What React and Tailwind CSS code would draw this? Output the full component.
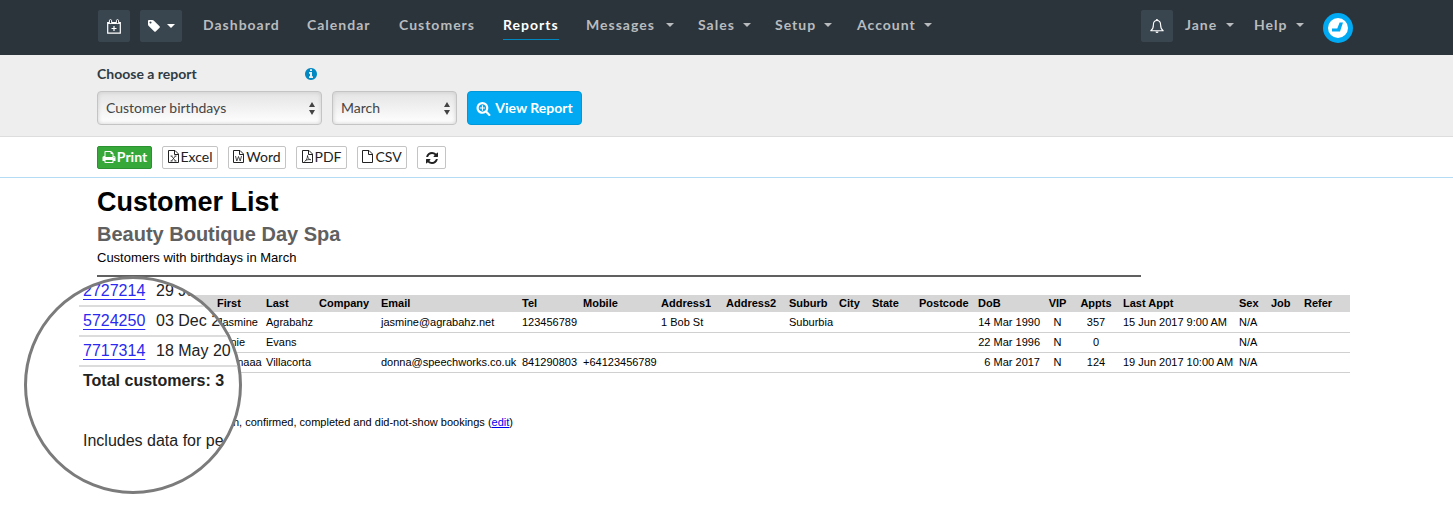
import React from "react";

const paths = {
  tag: "M576 448q0-53-37.5-90.5t-90.5-37.5-90.5 37.5-37.5 90.5 37.5 90.5 90.5 37.5 90.5-37.5 37.5-90.5zm1067 576q0 53-37 90l-491 492q-39 37-91 37-53 0-90-37l-715-716q-38-37-64.5-101t-26.5-117v-416q0-52 38-90t90-38h416q53 0 117 26.5t102 64.5l715 714q37 39 37 91z",
  info: "M1152 1376v-160q0-14-9-23t-23-9h-96v-512q0-14-9-23t-23-9h-320q-14 0-23 9t-9 23v160q0 14 9 23t23 9h96v320h-96q-14 0-23 9t-9 23v160q0 14 9 23t23 9h448q14 0 23-9t9-23zm-128-896v-160q0-14-9-23t-23-9h-192q-14 0-23 9t-9 23v160q0 14 9 23t23 9h192q14 0 23-9t9-23zm640 416q0 209-103 385.5t-279.5 279.5-385.5 103-385.5-103-279.5-279.5-103-385.5 103-385.5 279.5-279.5 385.5-103 385.5 103 279.5 279.5 103 385.5z",
  zoomIn: "M1088 800v64q0 13-9.5 22.5t-22.5 9.5h-224v224q0 13-9.5 22.5t-22.5 9.5h-64q-13 0-22.5-9.5t-9.5-22.5v-224h-224q-13 0-22.5-9.5t-9.5-22.5v-64q0-13 9.5-22.5t22.5-9.5h224v-224q0-13 9.5-22.5t22.5-9.5h64q13 0 22.5 9.5t9.5 22.5v224h224q13 0 22.5 9.5t9.5 22.5zm128 32q0-185-131.5-316.5t-316.5-131.5-316.5 131.5-131.5 316.5 131.5 316.5 316.5 131.5 316.5-131.5 131.5-316.5zm512 832q0 53-37.5 90.5t-90.5 37.5q-54 0-90-38l-343-342q-179 124-399 124-143 0-273.5-55.5t-225-150-150-225-55.5-273.5 55.5-273.5 150-225 225-150 273.5-55.5 273.5 55.5 225 150 150 225 55.5 273.5q0 220-124 399l343 343q37 37 37 90z",
  print: "M448 1536h896v-256h-896v256zm0-640h896v-384h-160q-40 0-68-28t-28-68v-160h-640v640zm1152 64q0-26-19-45t-45-19-45 19-19 45 19 45 45 19 45-19 19-45zm128 0v416q0 13-9.5 22.5t-22.5 9.5h-224v160q0 40-28 68t-68 28h-960q-40 0-68-28t-28-68v-160h-224q-13 0-22.5-9.5t-9.5-22.5v-416q0-79 56.5-135.5t135.5-56.5h64v-544q0-40 28-68t68-28h672q40 0 88 20t76 48l152 152q28 28 48 76t20 88v256h64q79 0 135.5 56.5t56.5 135.5z",
  refresh: "M1639 1056q0 5-1 7-64 268-268 434.5t-478 166.5q-146 0-282.5-55t-243.5-157l-129 129q-19 19-45 19t-45-19-19-45v-448q0-26 19-45t45-19h448q26 0 45 19t19 45-19 45l-137 137q71 66 161 102t187 36q134 0 250-65t186-179q11-17 53-117 8-23 30-23h192q13 0 22.5 9.5t9.5 22.5zm25-800v448q0 26-19 45t-45 19h-448q-26 0-45-19t-19-45 19-45l138-138q-148-137-349-137-134 0-250 65t-186 179q-11 17-53 117-8 23-30 23h-199q-13 0-22.5-9.5t-9.5-22.5v-7q65-268 270-434.5t480-166.5q146 0 284 55.5t245 156.5l130-129q19-19 45-19t45 19 19 45z",
};

const Icon = ({ name, className }) => (
  <svg viewBox="0 0 1792 1792" fill="currentColor" aria-hidden="true" className={className}>
    <path d={paths[name]} />
  </svg>
);

const Caret = () => (
  <svg viewBox="0 0 8 4" fill="currentColor" aria-hidden="true" className="h-1 w-2">
    <path d="M0 0h8L4 4z" />
  </svg>
);

const CalendarPlus = () => (
  <svg viewBox="0 0 14 15" fill="none" stroke="currentColor" aria-hidden="true" className="h-[15px] w-3.5">
    <path d="M.7 3.5h12.6v10.7H.7z" strokeWidth="1.2" />
    <path d="M1 3h12v2H1z" fill="currentColor" stroke="none" />
    <rect x="2.4" y=".6" width="2.2" height="4" rx="1.1" fill="#2b333b" />
    <rect x="9.4" y=".6" width="2.2" height="4" rx="1.1" fill="#2b333b" />
    <path d="M7 7v5M4.5 9.5h5" strokeWidth="1.2" />
  </svg>
);

const Bell = () => (
  <svg viewBox="0 0 14 15" fill="none" stroke="currentColor" strokeWidth="1.1" aria-hidden="true" className="h-[15px] w-3.5">
    <path d="M7 1.5c-2.3 0-3.6 1.7-3.6 4.2 0 3.4-.8 4.8-2.6 6h12.4c-1.8-1.2-2.6-2.6-2.6-6C10.6 3.2 9.3 1.5 7 1.5z" strokeLinejoin="round" />
    <path d="M6.3 1.5a.7.9 0 0 1 1.4 0" />
    <path d="M5.5 12.5h3a1.5 1.5 0 0 1-3 0z" fill="currentColor" stroke="none" />
  </svg>
);

const fileMarks = {
  excel: "M3.5 6l4 5M7.5 6l-4 5M2.5 6h2M6.5 6h2M2.5 11h2M6.5 11h2",
  word: "M2.5 6l1.3 5 1.7-4.5 1.7 4.5L8.5 6",
  pdf: "M2.5 11.5c2-1 3-3.500 3-6 .2 2.5 1.5 4 3.2 4.2-2-.3-3.700 0-5.200.8",
};

const FileIcon = ({ type }) => (
  <svg viewBox="0 0 11 13" fill="none" stroke="currentColor" aria-hidden="true" className="h-[13px] w-[11px]">
    <path d="M.5.5H7L10.500 4v8.500H.5zM6.500.5v4h4" />
    {fileMarks[type] && <path d={fileMarks[type]} strokeWidth=".8" />}
  </svg>
);

const Logo = () => (
  <svg viewBox="0 0 30 30" role="img" aria-label="Home" className="size-[30px]">
    <circle cx="15" cy="15" r="15" fill="#00a9f1" />
    <circle cx="15" cy="15" r="10" fill="#fff" />
    <path d="M9 15.500h5.300L16.600 9.500H20L17 18.500H9z" fill="#00a9f1" />
  </svg>
);

const navItems = [
  { label: "Dashboard", width: "w-[104px]" },
  { label: "Calendar", width: "w-[92px]" },
  { label: "Customers", width: "w-[104px]" },
  { label: "Reports", width: "w-[83px]", active: true },
  { label: "Messages", width: "w-[112px]", menuWidth: "w-[88px]" },
  { label: "Sales", width: "w-[77px]", menuWidth: "w-[53px]" },
  { label: "Setup", width: "w-[82px]", menuWidth: "w-[57px]" },
  { label: "Account", width: "w-[75px]", menuWidth: "w-[75px]" },
];

const NavItem = ({ label, width, active, menuWidth }) => (
  <li className={width}>
    {menuWidth ? (
      <button type="button" className={`flex items-center justify-between text-[#b9bcbe] ${menuWidth}`}>
        {label}
        <Caret />
      </button>
    ) : (
      <a
        href="#"
        className={
          active
            ? "inline-block border-b border-[#0088c2] pb-1 text-white"
            : "inline-block pb-1 text-[#b9bcbe]"
        }
      >
        {label}
      </a>
    )}
  </li>
);

const NavBar = () => (
  <header className="flex h-[55px] items-start bg-[#2b333b] pr-[100px] pl-[98px] text-sm leading-5 font-bold">
    <div className="flex gap-2.5 pt-2.5 text-white">
      <button type="button" aria-label="New booking" className="flex size-8 items-center justify-center rounded-xs bg-[#3a464f]">
        <CalendarPlus />
      </button>
      <button type="button" aria-label="Tags" className="flex h-8 w-[42px] items-center justify-center gap-1.5 rounded-xs bg-[#3a464f]">
        <Icon name="tag" className="size-3.5" />
        <Caret />
      </button>
    </div>
    <nav className="ml-[21px] pt-[15px] tracking-[1px]">
      <ul className="flex">
        {navItems.map((item) => (
          <NavItem key={item.label} {...item} />
        ))}
      </ul>
    </nav>
    <div className="ml-auto flex items-start tracking-[1px] text-[#b9bcbe]">
      <button type="button" aria-label="Notifications" className="mt-2.5 flex size-8 items-center justify-center rounded-xs bg-[#3a464f] text-white">
        <Bell />
      </button>
      <button type="button" className="mt-[15px] ml-3 flex w-[49px] items-center justify-between">
        Jane
        <Caret />
      </button>
      <button type="button" className="mt-[15px] ml-5 flex w-[50px] items-center justify-between">
        Help
        <Caret />
      </button>
      <a href="#" className="mt-[13px] ml-[19px]">
        <Logo />
      </a>
    </div>
  </header>
);

const SelectBox = ({ id, label, options, width }) => (
  <div className={`relative ${width}`}>
    <select
      id={id}
      aria-label={label}
      className="h-[34px] w-full appearance-none rounded-sm border border-[#c4c4c4] bg-linear-to-b from-[#e4e4e4] to-white px-2 text-sm text-[#444] shadow-[inset_0_0_4px_#cccccc]"
    >
      {options.map((option) => (
        <option key={option}>{option}</option>
      ))}
    </select>
    <svg viewBox="0 0 6 13" fill="#444" aria-hidden="true" className="pointer-events-none absolute top-[11px] right-[7px] h-[13px] w-1.5">
      <path d="M3 0l3 5H0zM3 13l3-5H0z" />
    </svg>
  </div>
);

const FilterBar = () => (
  <form className="border-b border-[#dddddd] bg-[#eeeeee] pt-2 pb-[11px] pl-[97px]">
    <div className="flex h-7 w-[221px] items-start justify-between pt-px">
      <label htmlFor="report" className="text-sm leading-5 font-bold text-[#2f3b44]">
        Choose a report
      </label>
      <button type="button" aria-label="About reports" className="pt-[3px] text-[#0088c2]">
        <Icon name="info" className="size-3.5" />
      </button>
    </div>
    <div className="flex gap-2.5">
      <SelectBox id="report" options={["Customer birthdays"]} width="w-[225px]" />
      <SelectBox id="month" label="Month" options={["March"]} width="w-[125px]" />
      <button type="button" className="flex h-[34px] w-[115px] items-center justify-center gap-1 rounded-sm border border-[#0098d9] bg-[#00a9f1] text-sm font-bold text-white">
        <Icon name="zoomIn" className="size-[15px]" />
        View Report
      </button>
    </div>
  </form>
);

const exportsList = [
  { label: "Excel", type: "excel", width: "w-14" },
  { label: "Word", type: "word", width: "w-[58px]" },
  { label: "PDF", type: "pdf", width: "w-[51px]" },
  { label: "CSV", type: "blank", width: "w-[50px]" },
];

const ExportBar = () => (
  <div className="flex gap-2.5 border-b border-[#b5dcf5] pt-[9px] pb-2 pl-[97px] text-sm text-[#222]">
    <button type="button" className="flex h-[23px] w-[55px] items-center justify-center gap-px rounded-xs border border-[#2c9130] bg-[#36a83a] pb-0.5 font-bold text-white">
      <Icon name="print" className="size-3.5" />
      Print
    </button>
    {exportsList.map(({ label, type, width }) => (
      <button key={label} type="button" className={`flex h-[23px] items-center justify-center gap-0.5 rounded-xs border border-[#c4c4c4] pb-0.5 ${width}`}>
        <FileIcon type={type} />
        {label}
      </button>
    ))}
    <button type="button" aria-label="Refresh" className="flex h-[23px] w-[29px] items-center justify-center rounded-xs border border-[#c4c4c4]">
      <Icon name="refresh" className="size-3.5" />
    </button>
  </div>
);

const columns = [
  { label: "", width: "w-[117px]" },
  { label: "First", width: "w-[49px]" },
  { label: "Last", width: "w-[53px]" },
  { label: "Company", width: "w-[62px]" },
  { label: "Email", width: "w-[141px]" },
  { label: "Tel", width: "w-[61px]" },
  { label: "Mobile", width: "w-[78px]" },
  { label: "Address1", width: "w-[65px]" },
  { label: "Address2", width: "w-[63px]" },
  { label: "Suburb", width: "w-[50px]" },
  { label: "City", width: "w-[33px]" },
  { label: "State", width: "w-[47px]" },
  { label: "Postcode", width: "w-[59px]" },
  { label: "DoB", width: "w-[68px]", align: "text-right" },
  { label: "VIP", width: "w-[29px]", align: "text-center", head: "text-center" },
  { label: "Appts", width: "w-[48px]", align: "text-center", head: "text-center" },
  { label: "Last Appt", width: "w-[116px]" },
  { label: "Sex", width: "w-8" },
  { label: "Job", width: "w-[33px]" },
  { label: "Refer", width: "w-[49px]" },
];

const rows = [
  ["", "Jasmine", "Agrabahz", "", "jasmine@agrabahz.net", "123456789", "", "1 Bob St", "", "Suburbia", "", "", "", "14 Mar 1990", "N", "357", "15 Jun 2017 9:00 AM", "N/A", "", ""],
  ["", "Annie", "Evans", "", "", "", "", "", "", "", "", "", "", "22 Mar 1996", "N", "0", "", "N/A", "", ""],
  ["", "Donnaaa", "Villacorta", "", "donna@speechworks.co.uk", "841290803", "+64123456789", "", "", "", "", "", "", "6 Mar 2017", "N", "124", "19 Jun 2017 10:00 AM", "N/A", "", ""],
];

const CustomerTable = () => (
  <table className="mt-[18px] w-full table-fixed border-collapse text-[11px] leading-[14px] whitespace-nowrap">
    <thead>
      <tr className="h-[17px] bg-[#d6d6d6]">
        {columns.map(({ label, width, head }) => (
          <th key={label} className={`px-[3px] pt-0 pb-0.5 font-bold ${width} ${head || "text-left"}`}>
            {label}
          </th>
        ))}
      </tr>
    </thead>
    <tbody>
      {rows.map((row) => (
        <tr key={row[1]} className="h-5 border-b border-[#d0d0d0]">
          {row.map((cell, i) => (
            <td key={columns[i].label} className={`px-[3px] py-0 ${columns[i].align || "text-left"}`}>
              {cell}
            </td>
          ))}
        </tr>
      ))}
    </tbody>
  </table>
);

const lensRows = [
  ["2727214", "29 Jun"],
  ["5724250", "03 Dec 20"],
  ["7717314", "18 May 20"],
];

// Magnifier that sits over the left end of the report
const Lens = () => (
  <div className="absolute top-[98px] left-6 size-[218px] overflow-hidden rounded-full border-3 border-[#7b7b7b] bg-white text-base leading-[27px] whitespace-nowrap text-[#222]">
    <div className="-mt-0.5 w-[300px] pl-[52px]">
      {lensRows.map(([id, created]) => (
        <div key={id} className="flex gap-2 border-b-2 border-[#dcdcdc] pl-1 leading-7">
          <a href="#" className="w-[65px] text-[#2a2af0] underline underline-offset-3">
            {id}
          </a>
          <span>{created}</span>
        </div>
      ))}
      <p className="pl-1 font-bold">Total customers: 3</p>
      <p className="mt-[33px] pl-1">Includes data for pe</p>
    </div>
  </div>
);

const Report = () => (
  <main className="relative pr-[103px] pl-[97px] font-['Liberation_Sans',Arial,sans-serif] text-black">
    <h1 className="pt-2 text-[27px] leading-8 font-bold">Customer List</h1>
    <h2 className="mt-1 text-xl leading-6 font-bold text-[#606060]">Beauty Boutique Day Spa</h2>
    <p className="mt-0.5 text-[13px] leading-5">Customers with birthdays in March</p>
    <hr className="mt-[7px] w-5/6 border-t-2 border-[#606060]" />
    <CustomerTable />
    <p className="mt-[41px] pl-0.5 text-[11px] leading-4">
      Includes data for pencilled-in, confirmed, completed and did-not-show bookings (
      <a href="#" className="text-[#0000ee] underline">edit</a>)
    </p>
    <Lens />
  </main>
);

const App = () => (
  <div className="min-h-screen bg-white font-[Lato,sans-serif]">
    <NavBar />
    <FilterBar />
    <ExportBar />
    <Report />
  </div>
);

export default App;
